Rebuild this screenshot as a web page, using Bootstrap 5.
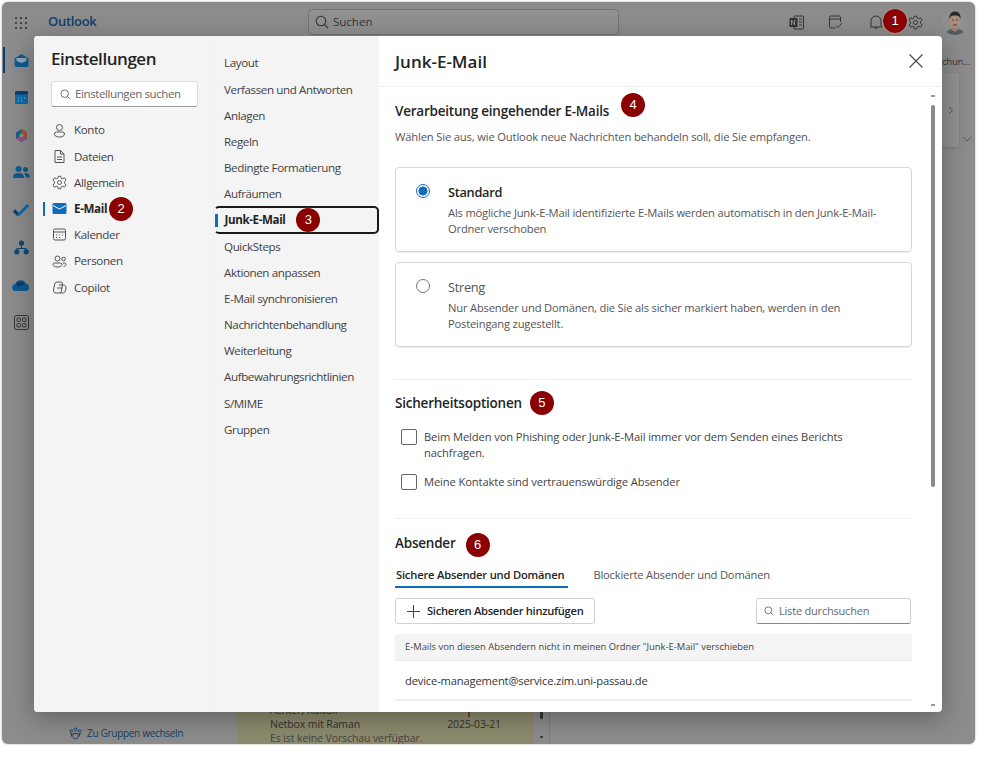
<!doctype html>
<html lang="de"><head><meta charset="utf-8"><title>Outlook Einstellungen</title>
<link href="https://cdn.jsdelivr.net/npm/bootstrap@5.3.0/dist/css/bootstrap.min.css" rel="stylesheet">
<style>
html,body{height:100%;background:#fff;overflow:hidden}
body{font-family:"Open Sans","Liberation Sans",sans-serif;font-size:12px;color:#333}
.appwin{position:relative;width:973px;height:742px;margin:2px 0 0 2px;background:#8c8c8c;border-radius:6px;overflow:hidden;box-shadow:0 0 2px #999}
.topbar{height:40px}
.waffle{width:32px;margin-left:3px}
.brand{color:#0e3f6e;font-size:13px;font-weight:600;letter-spacing:-.3px;width:260px;margin-left:11px}
.searchbox{width:311px;height:26px;background:#909090;border:1px solid #737373;border-radius:4px;color:#333;font-size:11.5px;padding-left:6px;gap:4px}
.topicons{gap:24px;margin-right:7px}
.avatar{width:26px;height:26px;border-radius:50%;overflow:hidden;margin-left:-5px}
.underlay{height:702px}
.rail{width:38px;padding-top:8px;gap:17.5px}
.railicon{height:20px;position:relative;width:100%;display:flex;align-items:center;justify-content:center}
.railicon.active::before{content:"";position:absolute;left:1px;top:-3px;width:2px;height:26px;background:#0e3f6e}
.mailpane{width:197px;position:relative}
.groupsw{position:absolute;left:29px;bottom:3px;color:#153f66;font-size:10px;letter-spacing:-.3px;gap:5px}
.msgs{width:313px;background:#8d8b6d;position:relative;color:#333;font-size:10.5px;line-height:14px;letter-spacing:-.1px;border-right:1px solid #7d7d7d}
.msgrows{position:absolute;left:33px;right:48px;bottom:-1px}
.msgdate{margin-left:auto}
.msgflag{position:absolute;left:198px;top:9px;width:2px;height:5px;background:#7b3b2b}
.msgbar{position:absolute;right:0;top:0;bottom:0;width:15px;background:#8c8c8c}
.msgthumb{position:absolute;right:6px;bottom:25px;width:3px;height:12px;background:#333;border-radius:2px}
.msgarrow{position:absolute;right:6px;bottom:6px;width:3px;height:2px;background:#444}
.rightedge{position:absolute;left:940px;top:34px;width:33px;height:120px;padding-top:19px;font-size:9.5px;line-height:13px;letter-spacing:-.2px;color:#333;white-space:nowrap}
.sidecard{width:17px;height:74px;margin-top:5px;background:#919191;color:#555;box-shadow:0 1px 2px #777}
.chevdown{position:absolute;left:20px;top:100px}
.setmodal{position:absolute;left:32px;top:34px;width:908px;height:676px;background:#fff;border-radius:4px;box-shadow:0 6px 26px rgba(0,0,0,.32);overflow:hidden}
.navone{width:180px;background:#f4f4f4;border-right:1px solid #efefef}
.navtwo{width:165px;background:#f4f4f4;padding-top:14px}
.settitle{font-size:17px;font-weight:600;color:#242424;letter-spacing:-.45px;margin:10px 0 10px 17px;line-height:25px}
.setsearch{width:147px;height:26px;margin-left:17px;background:#fff;border:1px solid #ddd;border-bottom:1px solid #999;border-radius:3px;color:#666;font-size:11.5px;letter-spacing:-.4px;padding-left:8px;gap:4px;margin-bottom:10px}
.navrow{height:26.2px;font-size:11.6px;letter-spacing:-.35px;color:#424242;padding-left:18px;gap:7px;position:relative;white-space:nowrap}
.navrow.sel{font-weight:700;color:#242424}
.navrow.sel::before{content:"";position:absolute;left:9px;top:6px;width:2px;height:14px;background:#0f6cbd}
.navsub{height:26.2px;font-size:11.6px;letter-spacing:-.39px;color:#424242;padding-left:10px;white-space:nowrap;position:relative}
.navsub.sel{font-weight:700;color:#242424;border:2px solid #1a1a1a;border-left-color:transparent;border-radius:5px;padding-left:8.5px;height:28px;margin:-1px 0;box-sizing:border-box;gap:11px}
.navsub.sel::before{content:"";position:absolute;left:-1px;top:6px;width:2.5px;height:13px;background:#0f6cbd}
.mainpane{flex:1;min-width:0;position:relative}
.mainhead{height:51px;border-bottom:1px solid #ededed;padding:0 19px 0 16px}
.mainhead h1{font-size:17px;font-weight:600;color:#242424;margin:2px 0 0}
.closex{background:none;border:0;padding:0;line-height:0}
.scrollarea{height:625px;overflow:hidden;padding:5px 30px 0 16px;position:relative}
.sechead{font-size:13.5px;font-weight:600;color:#242424;margin:0;line-height:24px;letter-spacing:-.22px}
.headfirst{height:24px;margin-top:7px}
.secdesc{font-size:11.2px;color:#555;letter-spacing:-.15px;margin:6px 0 22px;line-height:16px}
.optcard{border:1px solid #d6d6d6;border-radius:4px;height:85px;padding:14px 20px;margin-bottom:10px;gap:18px;box-shadow:0 1px 1px #eee}
.dotoff,.doton{width:14px;height:14px;border-radius:50%;flex:none;margin-top:2px}
.doton{border:1.5px solid #0f6cbd;background:radial-gradient(circle,#0f6cbd 0 4.2px,#fff 4.8px)}
.dotoff{border:1px solid #777;background:#fff}
.optname{font-size:12.8px;line-height:20px;letter-spacing:-.3px}
.opttext{font-size:11.2px;color:#555;line-height:16px;margin-top:3px;letter-spacing:-.19px}
.sepline{border-top:1px solid #ededed}
.chk{width:16px;height:16px;border:1px solid #666;border-radius:2px;flex:none;margin-top:1px}
.chkrow{font-size:11.2px;color:#444;line-height:16px;gap:7px;padding:0 40px 0 6px;letter-spacing:-.12px}
.tabon{font-size:11.2px;font-weight:600;color:#242424;letter-spacing:-.2px;padding:2px 4px 2.5px 1px;border-bottom:2.5px solid #0f6cbd;margin-right:25px;white-space:nowrap}
.taboff{font-size:11.2px;color:#555;letter-spacing:-.2px;padding:2px 0 3px;white-space:nowrap}
.addbtn{height:26px;border:1px solid #d1d1d1;border-radius:3px;background:#fff;color:#242424;font-size:11.2px;font-weight:600;letter-spacing:-.3px;padding:0 11px;gap:7px;display:flex;align-items:center}
.listsearch{width:155px;height:26px;border:1px solid #d1d1d1;border-bottom-color:#888;border-radius:3px;color:#666;font-size:11px;letter-spacing:-.2px;padding-left:7px;gap:5px;margin-right:1px}
.tablehead{background:#f4f4f4;height:27px;font-size:9.4px;color:#444;padding-left:10px;border-radius:3px 3px 0 0;margin-top:10px;border-bottom:1px solid #ececec;white-space:nowrap}
.tablerow{height:40px;padding-top:2px;font-size:11.2px;letter-spacing:-.17px;color:#333;padding-left:10px;border-bottom:2px solid #f0f0f0}
.sbar{position:absolute;right:5px;top:51px;bottom:0;width:8px}
.sthumb{position:absolute;left:2px;top:18px;width:4px;height:382px;background:#8a8a8a;border-radius:2px}
.sarrow{position:absolute;left:2px;width:4px;height:2px;background:#999}
.sarrowup{top:8px}.sarrowdown{bottom:6px}
.numdot{width:24px;height:24px;border-radius:50%;background:#8b0000;color:#fff;font-family:"Liberation Sans",sans-serif;font-size:13px;font-weight:400;letter-spacing:0;flex:none;display:inline-flex;align-items:center;justify-content:center;box-shadow:0 0 1px #fff}
.numabs{position:absolute;left:881px;top:7px;z-index:5}
.dotup{margin-left:12px;margin-top:-12px}
.dotmid{margin-left:8px}
.dotlow{margin-left:10px;margin-top:4px}
.dotmail{margin-left:-5px}
.subtle{color:#444}
.sp31{margin-top:32px}.sp27{margin-top:28px}.sp11{margin-top:11px}.sp10{margin-top:10px}.sp13{margin-top:13px}.sp8{margin-top:8px}
.chkflat{margin-top:0}.chktext{padding-top:1px}
.ink{color:#242424}.inkmid{color:#555}
</style></head>
<body>
<div class="appwin">
 <div class="topbar d-flex align-items-center">
  <div class="waffle text-center"><svg width="14" height="14" viewBox="0 0 14 14" fill="#333"><circle cx="2" cy="2" r="1.1"/><circle cx="7" cy="2" r="1.1"/><circle cx="12" cy="2" r="1.1"/><circle cx="2" cy="7" r="1.1"/><circle cx="7" cy="7" r="1.1"/><circle cx="12" cy="7" r="1.1"/><circle cx="2" cy="12" r="1.1"/><circle cx="7" cy="12" r="1.1"/><circle cx="12" cy="12" r="1.1"/></svg></div>
  <div class="brand">Outlook</div>
  <div class="searchbox d-flex align-items-center"><svg width="14" height="14" viewBox="0 0 14 14" fill="none" stroke="#333" stroke-width="1.1"><circle cx="6" cy="6" r="4.8"/><path d="M9.5 9.5 13 13"/></svg>Suchen</div>
  <div class="topicons d-flex align-items-center ms-auto">
   <svg width="15" height="15" viewBox="0 0 15 15"><rect x="5" y="1" width="9.5" height="13" rx="1" fill="none" stroke="#333"/><rect x=".5" y="3" width="8" height="9" fill="#333"/><path d="M10 4h3M10 7h3M10 10h3" stroke="#333"/><path d="M2.500 10V5l3 5V5" fill="none" stroke="#8c8c8c"/></svg>
   <svg width="16" height="15" viewBox="0 0 16 15" fill="none" stroke="#333"><path d="M7.500 13H3a1.500 1.500 0 0 1-1.500-1.500v-9A1.500 1.500 0 0 1 3 1h8a1.500 1.500 0 0 1 1.500 1.500V7M1.500 4h11"/><path d="M8 10.500l2 2 4-4.500"/></svg>
   <svg width="16" height="15" viewBox="0 0 16 15" fill="none" stroke="#333"><path d="M3 11V6a5 5 0 0 1 10 0v5l1 1H2zM6.500 12.500a1.600 1.600 0 0 0 3 0"/></svg>
   <svg width="15" height="15" viewBox="0 0 24 24" fill="none" stroke="#333" stroke-width="1.5"><circle cx="12" cy="12" r="3.2"/><path d="M10 2h4l.6 3 2.600 1.100L20 4.500 22.500 8l-2.200 2.200v3.600l2.200 2.200L20 19.500l-2.800-1.600-2.600 1.100-.6 3h-4l-.6-3-2.600-1.100L4 19.500 1.500 16l2.200-2.200v-3.600L1.500 8 4 4.500l2.800 1.600L9.400 5z"/></svg>
   <div class="avatar"><svg width="26" height="26" viewBox="0 0 26 26"><rect width="26" height="26" fill="#8f8f8f"/><path d="M3 26c1-5 5-6 10-6s9 1 10 6z" fill="#4f5f5f"/><path d="M10 17h6v4l-3 2-3-2z" fill="#9a8070"/><ellipse cx="13" cy="12" rx="5.5" ry="7" fill="#a98e7c"/><path d="M7.500 10c-.5-5 2-7.500 5.500-7.500s6 2.500 5.500 7.500c-1-2.500-2-3.500-5.500-3.500s-4.500 1-5.500 3.500z" fill="#2a2a2a"/><path d="M10 11h2M14 11h2M11 16h4" stroke="#3d302a" stroke-width=".8"/></svg></div>
  </div>
 </div>
 <div class="underlay d-flex">
  <div class="rail d-flex flex-column align-items-center">
   <div class="railicon active"><svg width="17" height="17" viewBox="0 0 17 17"><path d="M1.500 6.500 8.500 2l7 4.500V13a2 2 0 0 1-2 2h-10a2 2 0 0 1-2-2z" fill="#0e5a92"/><path d="M3.500 6h10v3l-5 2-5-2z" fill="#8fa6b8"/></svg></div>
   <div class="railicon"><svg width="15" height="15" viewBox="0 0 15 15"><rect x="1" y="1" width="13" height="13" rx="1.5" fill="#0e6aa8"/><path d="M1 4.500V2.500A1.500 1.500 0 0 1 2.500 1h10A1.500 1.500 0 0 1 14 2.500v2z" fill="#0a3f6d"/><path d="M4 8h1M7 8h1M10 8h1M4 11h1M7 11h1" stroke="#9cc"/></svg></div>
   <div class="railicon"><svg width="15" height="15" viewBox="0 0 15 15"><path d="M7.500 1 13 4.500v6L7.500 14 2 10.500v-6z" fill="#1a5f82"/><path d="M7.500 1 13 4.500v6l-5.500-3z" fill="#a4552c"/><path d="M2 10.500 7.500 7.500 13 10.500 7.500 14z" fill="#8f4f86"/><circle cx="7.500" cy="7.500" r="2" fill="#8c8c8c"/></svg></div>
   <div class="railicon"><svg width="17" height="15" viewBox="0 0 17 15" fill="#0e5a92"><circle cx="5.500" cy="4" r="3"/><circle cx="12.500" cy="4.500" r="2.500"/><path d="M0 13c0-4 2-5 5.500-5s5.500 1 5.500 5z"/><path d="M11 8c3 0 6 .5 6 4.500h-4.500c0-2-.5-3.500-1.500-4.500z"/></svg></div>
   <div class="railicon"><svg width="16" height="14" viewBox="0 0 16 14"><path d="M1 7.500 5.500 12" fill="none" stroke="#0a3f6d" stroke-width="3.2"/><path d="M5.500 12 15 2" fill="none" stroke="#0e6aa8" stroke-width="3.2"/></svg></div>
   <div class="railicon"><svg width="15" height="15" viewBox="0 0 15 15" fill="#0e4a78"><circle cx="7.500" cy="3" r="2.6"/><circle cx="2.800" cy="11.800" r="2.6"/><circle cx="12.200" cy="11.800" r="2.6"/><path d="M7 5h1v3h4.500v2h-1V9H3.500v1h-1V8H7z"/></svg></div>
   <div class="railicon"><svg width="18" height="12" viewBox="0 0 18 12"><path d="M4 12a3.500 3.500 0 0 1-.5-7A5.500 5.500 0 0 1 13.800 4.500 3.800 3.800 0 0 1 14 12z" fill="#0e5a92"/><path d="M9 3a5.500 5.500 0 0 1 4.800 1.500L7 8 3.500 5A5.500 5.500 0 0 1 9 3z" fill="#0a3f6d"/></svg></div>
   <div class="railicon"><svg width="15" height="15" viewBox="0 0 15 15" fill="none" stroke="#333"><rect x=".5" y=".5" width="14" height="14" rx="2"/><rect x="3" y="3" width="3.500" height="3.500" rx="1"/><rect x="8.500" y="3" width="3.500" height="3.500" rx="1"/><rect x="3" y="8.500" width="3.500" height="3.500" rx="1"/><rect x="8.500" y="8.500" width="3.500" height="3.500" rx="1"/></svg></div>
  </div>
  <div class="mailpane"><div class="groupsw d-flex align-items-center"><svg width="13" height="13" viewBox="0 0 13 13" fill="none" stroke="#153f66" stroke-width=".9"><circle cx="6.500" cy="2.500" r="1.500"/><circle cx="2.300" cy="4" r="1.200"/><circle cx="10.700" cy="4" r="1.200"/><path d="M4 6.500h5v3a2.500 2.500 0 0 1-5 0zM1 6.500h1.500v3M12 6.500h-1.500v3"/></svg>Zu Gruppen wechseln</div></div>
  <div class="msgs">
   <div class="msgrows">
    <span class="msgflag"></span>
    <div>Achter, Rudolf</div>
    <div class="d-flex"><span>Netbox mit Raman</span><span class="msgdate">2025-03-21</span></div>
    <div class="subtle">Es ist keine Vorschau verfügbar.</div>
   </div>
   <div class="msgbar"></div><div class="msgthumb"></div><div class="msgarrow"></div>
  </div>
 </div>
 <div class="rightedge">
  <div>chun...</div>
  <div class="sidecard d-flex align-items-center justify-content-center"><svg width="6" height="9" viewBox="0 0 6 9" fill="none" stroke="#555"><path d="M1 1l3.500 3.500L1 8"/></svg></div>
  <svg class="chevdown" width="10" height="6" viewBox="0 0 10 6" fill="none" stroke="#555"><path d="M1 1l4 4 4-4"/></svg>
 </div>
 <span class="numdot numabs">1</span>
 <div class="setmodal d-flex">
  <div class="navone">
   <div class="settitle">Einstellungen</div>
   <div class="setsearch d-flex align-items-center"><svg width="11" height="11" viewBox="0 0 14 14" fill="none" stroke="#666" stroke-width="1.2"><circle cx="6" cy="6" r="4.800"/><path d="M9.500 9.500 13 13"/></svg>Einstellungen suchen</div>
   <div class="navrow d-flex align-items-center"><svg width="15" height="15" viewBox="0 0 15 15" fill="none" stroke="#555"><circle cx="7.500" cy="4.500" r="3"/><path d="M2.500 11a2 2 0 0 1 2-2h6a2 2 0 0 1 2 2c0 2-2.500 3-5 3s-5-1-5-3z"/></svg>Konto</div>
   <div class="navrow d-flex align-items-center"><svg width="15" height="15" viewBox="0 0 15 15" fill="none" stroke="#555"><path d="M3 1.500h5.500L12 5v8.500H3zM8.500 1.500V5H12M5 8h5M5 10.500h5"/></svg>Dateien</div>
   <div class="navrow d-flex align-items-center"><svg width="15" height="15" viewBox="0 0 24 24" fill="none" stroke="#555" stroke-width="1.5"><circle cx="12" cy="12" r="3.200"/><path d="M10 2h4l.6 3 2.600 1.100L20 4.500 22.500 8l-2.200 2.200v3.600l2.200 2.200L20 19.500l-2.800-1.600-2.600 1.100-.6 3h-4l-.6-3-2.600-1.100L4 19.500 1.500 16l2.200-2.200v-3.600L1.500 8 4 4.500l2.800 1.600L9.400 5z"/></svg>Allgemein</div>
   <div class="navrow sel d-flex align-items-center"><svg width="15" height="13" viewBox="0 0 15 13"><rect x=".5" y="1" width="14" height="11" rx="1.500" fill="#0f6cbd"/><path d="M1 3.500 7.500 7 14 3.500" fill="none" stroke="#fff"/></svg><span>E-Mail</span><span class="numdot dotmail">2</span></div>
   <div class="navrow d-flex align-items-center"><svg width="15" height="15" viewBox="0 0 15 15" fill="none" stroke="#555"><rect x="1.500" y="2" width="12" height="11" rx="1.500"/><path d="M1.500 5h12M4 8h1M7 8h1M10 8h1M4 10.500h1M7 10.500h1"/></svg>Kalender</div>
   <div class="navrow d-flex align-items-center"><svg width="15" height="15" viewBox="0 0 15 15" fill="none" stroke="#555"><circle cx="5.500" cy="4.500" r="2.500"/><circle cx="11.500" cy="5" r="1.800"/><path d="M1 10.500a1.500 1.500 0 0 1 1.500-1.500h6a1.500 1.500 0 0 1 1.500 1.500c0 1.500-2 2.500-4.500 2.500S1 12 1 10.500zM11 9h1.500A1.500 1.500 0 0 1 14 10.500c0 1-1 2-2.500 2"/></svg>Personen</div>
   <div class="navrow d-flex align-items-center"><svg width="15" height="15" viewBox="0 0 15 15" fill="none" stroke="#555"><path d="M5 2h3.500a2 2 0 0 1 2 2l-1 7a2.500 2.500 0 0 1-2.500 2H4a2.500 2.500 0 0 1-2.500-3L2.500 5A3 3 0 0 1 5 2z"/><path d="M7 5h4.500A2.500 2.500 0 0 1 14 8l-.7 3a2.500 2.500 0 0 1-2.500 2H8M5 8h5"/></svg>Copilot</div>
  </div>
  <div class="navtwo">
   <div class="navsub d-flex align-items-center">Layout</div>
   <div class="navsub d-flex align-items-center">Verfassen und Antworten</div>
   <div class="navsub d-flex align-items-center">Anlagen</div>
   <div class="navsub d-flex align-items-center">Regeln</div>
   <div class="navsub d-flex align-items-center">Bedingte Formatierung</div>
   <div class="navsub d-flex align-items-center">Aufräumen</div>
   <div class="navsub sel d-flex align-items-center">Junk-E-Mail<span class="numdot">3</span></div>
   <div class="navsub d-flex align-items-center">QuickSteps</div>
   <div class="navsub d-flex align-items-center">Aktionen anpassen</div>
   <div class="navsub d-flex align-items-center">E-Mail synchronisieren</div>
   <div class="navsub d-flex align-items-center">Nachrichtenbehandlung</div>
   <div class="navsub d-flex align-items-center">Weiterleitung</div>
   <div class="navsub d-flex align-items-center">Aufbewahrungsrichtlinien</div>
   <div class="navsub d-flex align-items-center">S/MIME</div>
   <div class="navsub d-flex align-items-center">Gruppen</div>
  </div>
  <div class="mainpane">
   <div class="mainhead d-flex align-items-center justify-content-between">
    <h1>Junk-E-Mail</h1>
    <button class="closex" type="button" aria-label="Schließen"><svg width="14" height="14" viewBox="0 0 14 14" stroke="#555" stroke-width="1.4"><path d="M.5.500l13 13M13.500.5l-13 13"/></svg></button>
   </div>
   <div class="scrollarea">
    <h2 class="sechead headfirst d-flex align-items-center">Verarbeitung eingehender E-Mails<span class="numdot dotup">4</span></h2>
    <p class="secdesc">Wählen Sie aus, wie Outlook neue Nachrichten behandeln soll, die Sie empfangen.</p>
    <div class="optcard d-flex">
     <span class="doton"></span>
     <div><div class="optname fw-semibold ink">Standard</div><div class="opttext">Als mögliche Junk-E-Mail identifizierte E-Mails werden automatisch in den Junk-E-Mail-Ordner verschoben</div></div>
    </div>
    <div class="optcard d-flex">
     <span class="dotoff"></span>
     <div><div class="optname inkmid">Streng</div><div class="opttext">Nur Absender und Domänen, die Sie als sicher markiert haben, werden in den Posteingang zugestellt.</div></div>
    </div>
    <div class="sepline sp31"></div>
    <h2 class="sechead d-flex align-items-center sp11">Sicherheitsoptionen<span class="numdot dotmid">5</span></h2>
    <div class="chkrow d-flex sp13"><span class="chk"></span><span class="chktext">Beim Melden von Phishing oder Junk-E-Mail immer vor dem Senden eines Berichts nachfragen.</span></div>
    <div class="chkrow d-flex align-items-center sp13"><span class="chk chkflat"></span><span>Meine Kontakte sind vertrauenswürdige Absender</span></div>
    <div class="sepline sp27"></div>
    <h2 class="sechead d-flex align-items-center sp10">Absender<span class="numdot dotlow">6</span></h2>
    <div class="d-flex sp8"><div class="tabon">Sichere Absender und Domänen</div><div class="taboff">Blockierte Absender und Domänen</div></div>
    <div class="d-flex justify-content-between align-items-center sp10">
     <button type="button" class="addbtn"><svg width="13" height="13" viewBox="0 0 13 13" stroke="#444"><path d="M6.500 0v13M0 6.500h13"/></svg>Sicheren Absender hinzufügen</button>
     <div class="listsearch d-flex align-items-center"><svg width="10" height="10" viewBox="0 0 14 14" fill="none" stroke="#666" stroke-width="1.2"><circle cx="6" cy="6" r="4.800"/><path d="M9.500 9.500 13 13"/></svg>Liste durchsuchen</div>
    </div>
    <div class="tablehead d-flex align-items-center">E-Mails von diesen Absendern nicht in meinen Ordner "Junk-E-Mail" verschieben</div>
    <div class="tablerow d-flex align-items-center">device-management@service.zim.uni-passau.de</div>
   </div>
   <div class="sbar"><span class="sarrow sarrowup"></span><span class="sthumb"></span><span class="sarrow sarrowdown"></span></div>
  </div>
 </div>
</div>
<script src="https://cdn.jsdelivr.net/npm/bootstrap@5.3.0/dist/js/bootstrap.bundle.min.js"></script>
</body></html>
